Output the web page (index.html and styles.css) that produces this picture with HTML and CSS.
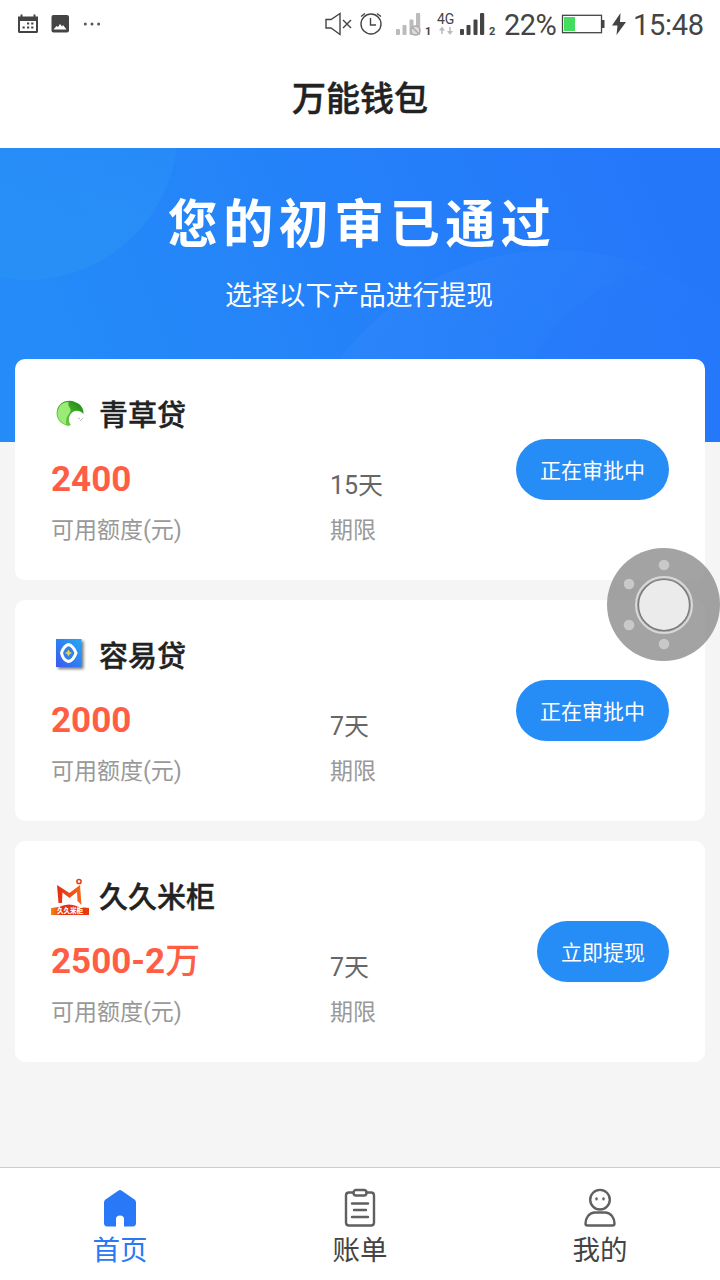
FILE: index.html
```html
<!DOCTYPE html>
<html lang="zh-CN">
<head>
<meta charset="utf-8">
<title>万能钱包</title>
<link rel="stylesheet" href="styles.css">
</head>
<body>
<div class="screen">
  <header class="status">
    <svg class="status-left" width="110" height="48" viewBox="0 0 110 48">
      <path fill="#444" fill-rule="evenodd" d="M18 16.5h2.500v-2h2v2h11v-2h2v2H38V31.500q0 1.500-1.500 1.500h-17Q18 33 18 31.500ZM20 21v10h16V21Z"/>
      <path fill="#444" d="M27 22.500h2.200v2H27zM31.200 22.500h2.200v2h-2.200zM22.500 26.500h2.200v2h-2.200zM27 26.500h2.200v2H27zM31.200 26.500h2.200v2h-2.200z"/>
      <rect x="51.500" y="15" width="17.500" height="17.500" rx="2" fill="#444"/>
      <path fill="#fff" d="M53.500 29.500l3-3.500 1.500 1 2-3 2 2.500 1-1.500 3.500 4.500z"/>
      <g fill="#555"><circle cx="85.300" cy="24" r="1.500"/><circle cx="92" cy="24" r="1.500"/><circle cx="98.600" cy="24" r="1.500"/></g>
    </svg>
    <div class="status-right">
      <svg width="178" height="48" viewBox="322 0 178 48">
        <g fill="none" stroke="#444" stroke-width="1.400">
          <path d="M326 19.500h5l9-6v21l-9-6.500h-5zM343 20l8 8M351 20l-8 8"/>
          <circle cx="371" cy="24" r="10"/>
          <path d="M370.500 18v7h5.500M361 16.500l4-3M377 13.500l4 3"/>
        </g>
        <g fill="#bbb"><rect x="396" y="29" width="4" height="6" rx="1"/><rect x="402.500" y="25" width="4" height="10" rx="1"/><rect x="409.500" y="19.500" width="4" height="15.500" rx="1"/><rect x="416" y="13" width="4.200" height="22" rx="1"/></g>
        <g fill="none" stroke="#aaa" stroke-width="1.400"><circle cx="415.500" cy="30.500" r="4.500" fill="#ddd"/><path d="M412.500 27.500l6 6"/></g>
        <g fill="#444"><rect x="460" y="29" width="4" height="6" rx="1"/><rect x="466.500" y="25" width="4" height="10" rx="1"/><rect x="473.500" y="19.500" width="4" height="15.500" rx="1"/><rect x="480" y="13" width="4.200" height="22" rx="1"/></g>
        <path d="M442 34v-5M450 27v5" stroke="#bbb" stroke-width="1.500"/>
        <path d="M439 30.500l3-4 3 4zM447 31l3 4 3-4z" fill="#bbb"/>
        <g class="tiny"><text x="425" y="34.500">1</text><text x="489" y="34.500">2</text></g>
        <text class="net" x="437" y="24">4G</text>
      </svg>
      <span class="percent">22%</span>
      <svg width="72" height="48" viewBox="560 0 72 48">
        <rect x="562.500" y="15.300" width="39" height="17.400" fill="#fff" stroke="#444" stroke-width="1.300"/>
        <rect x="564" y="17" width="11" height="14" fill="#45dd60"/>
        <rect x="602" y="20" width="2.500" height="8" fill="#444"/>
        <path d="M620.500 13l-8.500 12.500h5.500L616.500 35l9.500-13h-6z" fill="#444"/>
      </svg>
      <span class="clock">15:48</span>
    </div>
  </header>
  <h1 class="title">万能钱包</h1>

  <section class="hero">
    <svg class="hero-art" width="720" height="294" viewBox="0 0 720 294">
      <defs>
        <linearGradient id="bg" gradientUnits="userSpaceOnUse" x1="80" y1="260" x2="660" y2="20"><stop offset="0" stop-color="#248bf8"/><stop offset="1" stop-color="#2577fa"/></linearGradient>
        <linearGradient id="c1" x1="0" y1="0" x2="0" y2="1"><stop offset="0" stop-color="#2b8cf9" stop-opacity=".3"/><stop offset="1" stop-color="#2892f6" stop-opacity=".75"/></linearGradient>
        <linearGradient id="c2" x1="0" y1="0" x2="1" y2="1"><stop offset="0" stop-color="#358cfb" stop-opacity=".65"/><stop offset=".6" stop-color="#2577fa" stop-opacity=".1"/></linearGradient>
      </defs>
      <rect width="720" height="294" fill="url(#bg)"/>
      <circle cx="27" cy="-19" r="151" fill="url(#c1)"/>
      <circle cx="555" cy="368" r="266" fill="url(#c2)"/>
      <circle cx="694" cy="298" r="182" fill="#2577f9" fill-opacity=".4"/>
    </svg>
    <h2 class="hero-title">您的初审已通过</h2>
    <p class="hero-sub">选择以下产品进行提现</p>
  </section>

  <main class="cards">
    <article class="card">
      <div class="card-head">
        <svg class="logo" width="38" height="38" viewBox="0 0 38 38">
          <defs><linearGradient id="leaf" x1="0" y1="1" x2="1" y2="0"><stop offset="0" stop-color="#7ddd54"/><stop offset="1" stop-color="#15840c"/></linearGradient></defs>
          <path fill="url(#leaf)" d="M17 31C9 29 4 23 6 15C8 7 17 4 24 7C30 9 33 14 32.500 19C28 14 22 15 19 20C17 24 18 28 20 30Z"/>
          <path fill="#9aec76" d="M15 29.500C8 27 5 20 7.500 14C9 9 14 6.500 18 7.500C15 12 23 13 18 19C15 22 15 26 15 29.500Z"/>
          <path d="M29 26l3-3M27 24l2-1" stroke="#aaa" stroke-width=".8"/>
        </svg>
        <h3 class="name">青草贷</h3>
      </div>
      <div class="card-body">
        <div class="stat"><b class="amount">2400</b><span class="label">可用额度(元)</span></div>
        <div class="stat"><span class="term">15天</span><span class="label">期限</span></div>
        <button class="action">正在审批中</button>
      </div>
    </article>

    <article class="card">
      <div class="card-head">
        <svg class="logo" width="38" height="38" viewBox="0 0 38 38">
          <defs><linearGradient id="box" x1="0" y1="1" x2="1" y2="0"><stop offset="0" stop-color="#3b57ee"/><stop offset="1" stop-color="#24a9f6"/></linearGradient></defs>
          <rect class="logo-box" x="5" y="3" width="25.500" height="28" fill="url(#box)"/>
          <path fill="#347fe9" stroke="#fff" stroke-width="3" stroke-linejoin="round" d="M17.500 8.500Q22 9.500 25 17Q22.500 24.500 17.500 25.500Q12 24 10.500 17Q12.500 10 17.500 8.500Z"/>
          <path fill="#e5d34c" d="M17.500 13.500l1.200 2.300 2.300 1.200-2.300 1.200-1.200 2.300-1.200-2.300-2.300-1.200 2.300-1.200z"/>
        </svg>
        <h3 class="name">容易贷</h3>
      </div>
      <div class="card-body">
        <div class="stat"><b class="amount">2000</b><span class="label">可用额度(元)</span></div>
        <div class="stat"><span class="term">7天</span><span class="label">期限</span></div>
        <button class="action">正在审批中</button>
      </div>
    </article>

    <article class="card">
      <div class="card-head">
        <svg class="logo" width="38" height="38" viewBox="0 0 38 38">
          <defs><linearGradient id="mi" x1="0" y1="0" x2="1" y2="0"><stop offset="0" stop-color="#e52c13"/><stop offset="1" stop-color="#f56a19"/></linearGradient>
          <linearGradient id="band" x1="0" y1="0" x2="1" y2="0"><stop offset="0" stop-color="#f58a13"/><stop offset=".3" stop-color="#e52c10"/><stop offset="1" stop-color="#e83b12"/></linearGradient></defs>
          <path fill="url(#mi)" d="M6 8L18.500 16 29 8 30.500 28 26.500 24 26 15 18.500 21 11.500 15.500 11 26H7.500Z"/>
          <circle cx="28" cy="4.500" r="2.100" fill="none" stroke="#e83b12" stroke-width="1.500"/>
          <path fill="url(#band)" d="M0 31L8 30Q18 25 28 30L38 31V38H0Z"/>
          <text class="logo-text" x="6" y="36.300">久久米柜</text>
        </svg>
        <h3 class="name">久久米柜</h3>
      </div>
      <div class="card-body">
        <div class="stat"><b class="amount">2500-2<span class="unit">万</span></b><span class="label">可用额度(元)</span></div>
        <div class="stat"><span class="term">7天</span><span class="label">期限</span></div>
        <button class="action">立即提现</button>
      </div>
    </article>
  </main>

  <nav class="tabs">
    <a class="tab active">
      <svg width="40" height="40" viewBox="0 0 40 40"><path fill="#2878f7" d="M18.600 2.600Q20 1.500 21.400 2.600L34.500 11.500Q36 12.700 36 14.500V35Q36 38.500 32.500 38.500H24V31Q24 27.500 20 27.500T16 31V38.500H7.500Q4 38.500 4 35V14.500Q4 12.700 5.500 11.500Z"/></svg>
      <span>首页</span>
    </a>
    <a class="tab">
      <svg width="40" height="40" viewBox="0 0 40 40" fill="none" stroke="#606060" stroke-width="2.400" stroke-linecap="round"><path d="M13.500 4.500H9Q6 4.500 6 7.500V34.500Q6 37.500 9 37.500H31Q34 37.500 34 34.500V7.500Q34 4.500 31 4.500H26.500"/><rect x="13.500" y="2" width="13" height="5.500" rx="2.500"/><path d="M12 15.500H28M14 22H26M12 29H28"/></svg>
      <span>账单</span>
    </a>
    <a class="tab">
      <svg width="40" height="40" viewBox="0 0 40 40" fill="none" stroke="#606060" stroke-width="2.400"><circle cx="20" cy="11.700" r="9.800"/><path d="M15 24.500H25C31 24.500 34.500 30 34.500 35.500Q34.500 37.500 32.500 37.500H7.500Q5.500 37.500 5.500 35.500C5.500 30 9 24.500 15 24.500Z"/><path stroke-linecap="round" d="M16.500 10.500v.8M23.500 10.500v.8"/></svg>
      <span>我的</span>
    </a>
  </nav>

  <svg class="assist" width="114" height="114" viewBox="0 0 114 114">
    <circle cx="56.500" cy="56.500" r="56.500" fill="#8f8f8f" fill-opacity=".82"/>
    <g fill="#c9c9c9"><circle cx="57" cy="17" r="5.300"/><circle cx="22" cy="36" r="5.300"/><circle cx="22" cy="77" r="5.300"/><circle cx="57" cy="96" r="5.300"/></g>
    <circle cx="57" cy="57" r="28" fill="#a0a0a0" stroke="#d8d8d8" stroke-width="2"/>
    <circle cx="57" cy="57" r="25.500" fill="#ebebeb" stroke="#777" stroke-width="1.200"/>
  </svg>
</div>
</body>
</html>
```

FILE: styles.css
```css
* { box-sizing: border-box; margin: 0; padding: 0; }
body {
  background: #f5f5f5;
  font-family: Roboto, "Noto Sans CJK SC", sans-serif;
  color: #222;
}
.screen {
  position: relative;
  display: flex;
  flex-direction: column;
  width: 720px;
  height: 1280px;
  overflow: hidden;
}
.status {
  display: flex;
  justify-content: space-between;
  height: 48px;
  background: #fff;
  color: #444;
}
.status-right { display: flex; padding-right: 16px; line-height: 51px; }
.percent { width: 60px; padding-left: 4px; font-size: 29px; letter-spacing: -.6px; }
.clock { width: 72px; padding-left: 1px; font-size: 29px; letter-spacing: -.3px; white-space: nowrap; }
.tiny { font-size: 11px; font-weight: 700; fill: #444; }
.net { font-size: 14px; fill: #444; }
.title {
  height: 100px;
  background: #fff;
  font-size: 34px;
  font-weight: 500;
  line-height: 103px;
  text-align: center;
  -webkit-text-stroke: .5px currentColor;
}
.hero {
  position: relative;
  height: 294px;
  padding-top: 42px;
  color: #fff;
  text-align: center;
}
.hero-art { position: absolute; left: 0; top: 0; }
.hero-title {
  position: relative;
  padding-left: 4px;
  font-size: 50px;
  font-weight: 700;
  letter-spacing: 5.5px;
  line-height: 70px;
  transform: scaleY(1.04);
}
.hero-sub { position: relative; margin: 16px 2px 0 0; font-size: 26.8px; line-height: 40px; }
.cards {
  position: relative;
  display: flex;
  flex-direction: column;
  gap: 20px;
  flex: 1;
  margin-top: -83px;
  padding: 0 15px;
}
.card { height: 221px; padding: 36px; border-radius: 10px; background: #fff; }
.card-head { display: flex; align-items: center; gap: 10px; height: 38px; margin-bottom: 27px; }
.logo { overflow: visible; }
.logo-box { filter: drop-shadow(2px 2px 1.5px #0008); }
.logo-text { font: 900 6.500px "Noto Sans CJK SC", sans-serif; fill: #fff; }
.name { padding-top: 4px; font-size: 29px; font-weight: 500; line-height: 38px; -webkit-text-stroke: .4px currentColor; }
.card-body { display: grid; grid-template-columns: 279px 1fr auto; }
.stat { display: flex; flex-direction: column; gap: 15px; }
.amount { color: #ff5e45; font-size: 35px; line-height: 40px; }
.unit { font-weight: 500; }
.term { padding-top: 6px; color: #666; font-size: 25px; line-height: 40px; height: 40px; }
.label { color: #999; font-size: 23px; line-height: 31px; }
.action {
  height: 61px;
  margin-top: -21px;
  padding: 0 24px 2px;
  border: 0;
  border-radius: 31px;
  background: #268cf6;
  color: #fff;
  font: 21px "Noto Sans CJK SC", sans-serif;
}
.tabs {
  display: grid;
  grid-template-columns: repeat(3, 1fr);
  height: 113px;
  border-top: 1px solid #ccc;
  background: #fff;
}
.tab {
  display: flex;
  flex-direction: column;
  align-items: center;
  gap: 1px;
  padding-top: 20px;
  color: #444;
  font-size: 27.5px;
  line-height: 44px;
}
.tab.active { color: #2878f7; }
.assist { position: absolute; left: 607px; top: 548px; }
```
